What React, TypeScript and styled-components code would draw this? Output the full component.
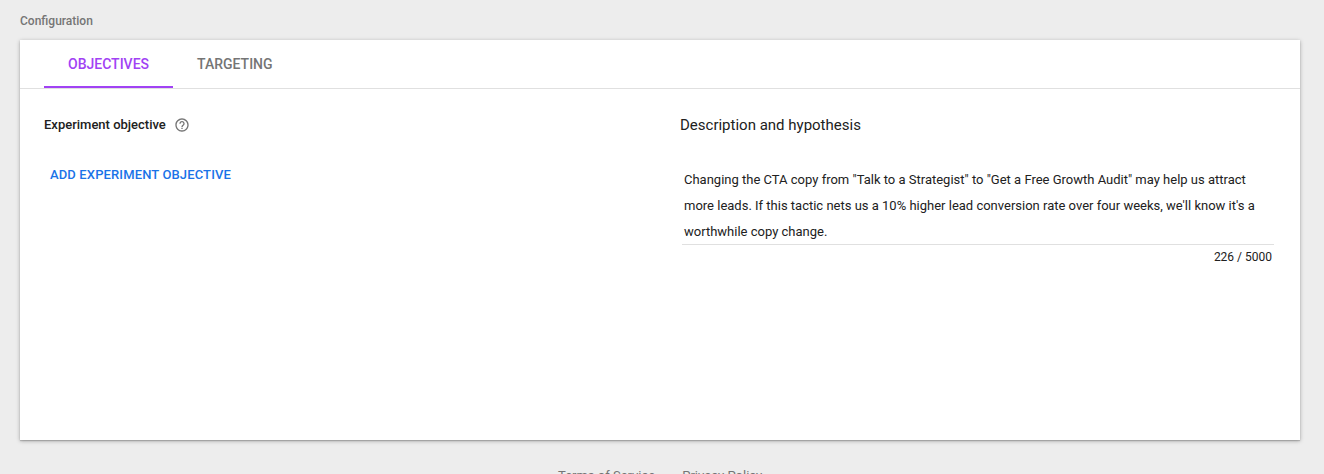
import React from "react";
import styled, { createGlobalStyle } from "styled-components";

const GlobalStyle = createGlobalStyle`
  * { box-sizing: border-box; }
  body { margin: 0; background: #ededed; font-family: Roboto, "Liberation Sans", sans-serif; color: #212121; }
`;
const Page = styled.main`
  height: 474px;
  overflow: hidden;
  padding: 12px 24px 0 20px;
`;
const SectionTitle = styled.h2`
  margin: 0;
  height: 28px;
  font-size: 12px;
  line-height: 18px;
  font-weight: 500;
  color: #757575;
`;
const Card = styled.section`
  height: 400px;
  background: #fff;
  box-shadow: 0 1px 4px rgba(0, 0, 0, 0.3), 0 1px 1px rgba(0, 0, 0, 0.15);
`;
const Tabs = styled.nav`
  display: flex;
  height: 49px;
  padding-left: 24px;
  border-bottom: 1px solid #e0e0e0;
`;
const Tab = styled.button<{ $active?: boolean }>`
  height: 48px;
  padding: 2px 24px 0;
  border: 0;
  border-bottom: 2px solid ${(p) => (p.$active ? "#a142f4" : "transparent")};
  background: none;
  font: 500 14px Roboto, sans-serif;
  color: ${(p) => (p.$active ? "#a142f4" : "#757575")};
`;
const Columns = styled.div`
  display: grid;
  grid-template-columns: 636px 594px;
  padding: 26px 0 0 24px;
`;
const Column = styled.div``;
const Heading = styled.h3<{ $large?: boolean }>`
  display: flex;
  align-items: center;
  gap: 8px;
  margin: 0;
  height: 20px;
  font-size: ${(p) => (p.$large ? "15px" : "13px")};
  line-height: ${(p) => (p.$large ? "18px" : "17px")};
  font-weight: ${(p) => (p.$large ? 400 : 500)};
`;
const HeadingText = styled.span`
  padding-bottom: 2px;
`;
const AddButton = styled.button`
  display: block;
  margin-top: 30px;
  padding: 0 6px;
  border: 0;
  background: none;
  font: 500 13px/20px Roboto, sans-serif;
  letter-spacing: 0.13px;
  color: #1a73e8;
`;
const Description = styled.div`
  margin: 32px 0 0 2px;
  padding-left: 2px;
  height: 78px;
  border-bottom: 1px solid #e0e0e0;
  font-size: 13px;
  line-height: 26px;
  white-space: pre-line;
`;
const Counter = styled.div`
  padding: 3px 2px 0 0;
  text-align: right;
  font-size: 12px;
  line-height: 18px;
`;
const Footer = styled.footer`
  display: flex;
  justify-content: flex-start;
  padding: 26px 0 0 538px;
  font-size: 13px;
  line-height: 20px;
  color: #757575;
`;
const Separator = styled.span`
  width: 27px;
  text-align: center;
`;

const HelpIcon = () => (
  <svg width="16" height="16" viewBox="0 0 24 24" fill="#757575">
    <path d="M11 18h2v-2h-2v2zm1-16C6.48 2 2 6.48 2 12s4.48 10 10 10 10-4.48 10-10S17.520 2 12 2zm0 18c-4.410 0-8-3.590-8-8s3.590-8 8-8 8 3.590 8 8-3.590 8-8 8zm0-14c-2.210 0-4 1.790-4 4h2c0-1.100.9-2 2-2s2 .9 2 2c0 2-3 1.750-3 5h2c0-2.250 3-2.500 3-5 0-2.210-1.790-4-4-4z" />
  </svg>
);

export default function App() {
  return (
    <Page>
      <GlobalStyle />
      <SectionTitle>Configuration</SectionTitle>
      <Card>
        <Tabs>
          <Tab $active>OBJECTIVES</Tab>
          <Tab>TARGETING</Tab>
        </Tabs>
        <Columns>
          <Column>
            <Heading>
              <HeadingText>Experiment objective</HeadingText>
              <HelpIcon />
            </Heading>
            <AddButton>ADD EXPERIMENT OBJECTIVE</AddButton>
          </Column>
          <Column>
            <Heading $large>Description and hypothesis</Heading>
            <Description>
              {`Changing the CTA copy from "Talk to a Strategist" to "Get a Free Growth Audit" may help us attract
more leads. If this tactic nets us a 10% higher lead conversion rate over four weeks, we'll know it's a
worthwhile copy change.`}
            </Description>
            <Counter>226 / 5000</Counter>
          </Column>
        </Columns>
      </Card>
      <Footer>
        <span>Terms of Service</span>
        <Separator>·</Separator>
        <span>Privacy Policy</span>
      </Footer>
    </Page>
  );
}
